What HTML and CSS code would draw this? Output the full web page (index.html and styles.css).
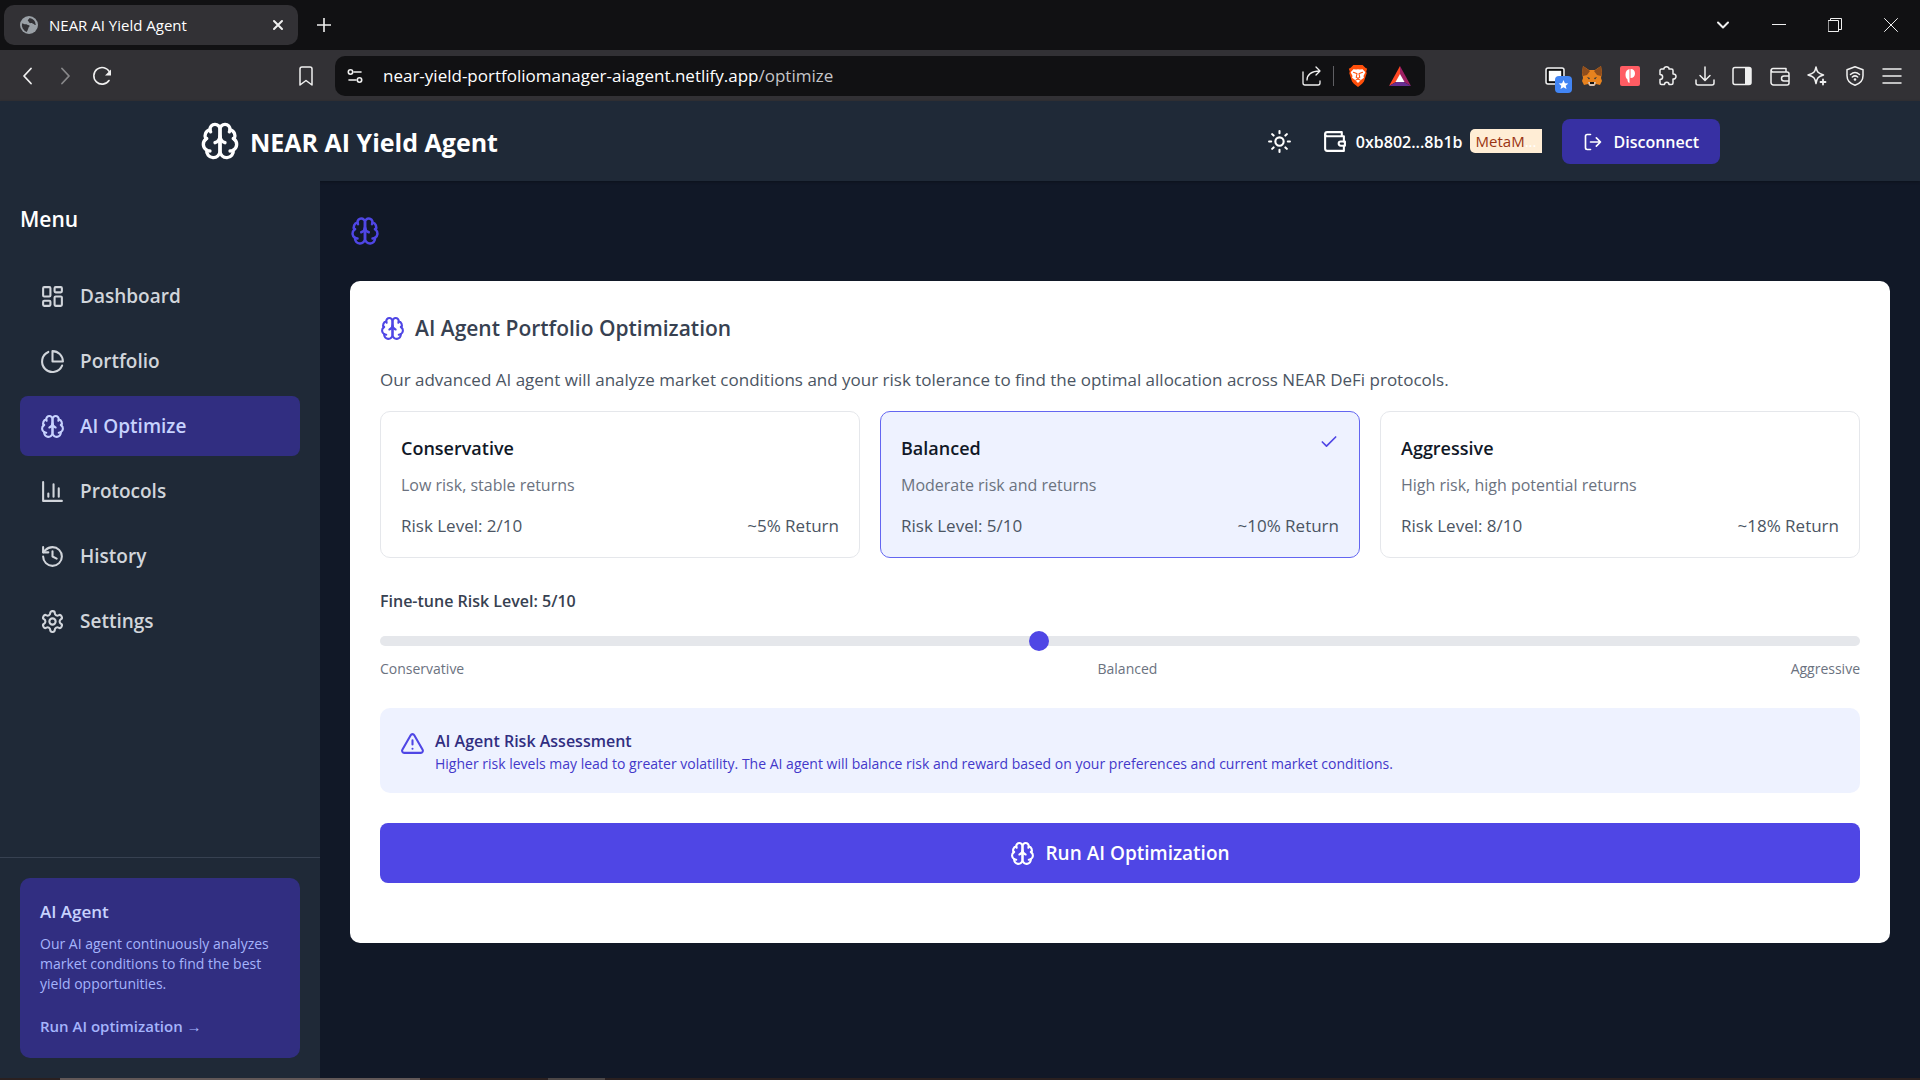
FILE: index.html
```html
<!DOCTYPE html>
<html lang="en">
<head>
<meta charset="utf-8">
<meta name="viewport" content="width=device-width, initial-scale=1">
<title>NEAR AI Yield Agent</title>
<link rel="stylesheet" href="styles.css">
</head>
<body>
<svg class="sprite" aria-hidden="true">
  <symbol id="brain" viewBox="0 0 24 24">
    <path d="M12 5a3 3 0 1 0-5.997.125 4 4 0 0 0-2.526 5.77 4 4 0 0 0 .556 6.588A4 4 0 1 0 12 18Z"/>
    <path d="M12 5a3 3 0 1 1 5.997.125 4 4 0 0 1 2.526 5.77 4 4 0 0 1-.556 6.588A4 4 0 1 1 12 18Z"/>
    <path d="M15 13a4.5 4.5 0 0 1-3-4 4.5 4.5 0 0 1-3 4"/>
    <path d="M17.599 6.5a3 3 0 0 0 .399-1.375"/>
    <path d="M6.003 5.125A3 3 0 0 0 6.401 6.5"/>
    <path d="M3.477 10.896a4 4 0 0 1 .585-.396"/>
    <path d="M19.938 10.5a4 4 0 0 1 .585.396"/>
    <path d="M6 18a4 4 0 0 1-1.967-.516"/>
    <path d="M19.967 17.484A4 4 0 0 1 18 18"/>
  </symbol>
</svg>

<div class="tabstrip">
  <div class="tab">
    <svg class="tab-globe" viewBox="0 0 18 18" aria-hidden="true"><circle cx="9" cy="9" r="9" fill="#9aa0a6"/><path d="M2 7.500c1.500 0 2.200.8 3.700.8 1.300 0 1.800.7 3.300.9.800.2.700 1.300 0 1.700-.8.500-.5 1.500-1 2.300-.5.900-.6 2-1.300 2.700A7.200 7.200 0 0 1 2 7.500zM9.500 2c-.3 1.200-1.500 1.300-1.700 2.300-.2.900 1 .9 1.200 1.700.2 1 1.200 1.400 2.200 1 .9-.3 1 .6 1.900.7 1 .2 1.300 1.300 2.700 1.300A7 7 0 0 0 9.500 2z" fill="#323135"/></svg>
    <span class="tab-title">NEAR AI Yield Agent</span>
    <button class="chrome-btn" aria-label="Close tab"><svg class="i12" viewBox="0 0 12 12"><path d="M2 2l8 8M10 2l-8 8" stroke-width="2"/></svg></button>
  </div>
  <button class="chrome-btn newtab" aria-label="New tab"><svg class="i14" viewBox="0 0 14 14"><path d="M7 0v14M0 7h14" stroke-width="1.600"/></svg></button>
  <div class="window-controls">
    <button class="chrome-btn" aria-label="Search tabs"><svg class="i14" viewBox="0 0 14 14"><path d="M2 4.500l5 5 5-5" stroke-width="2"/></svg></button>
    <button class="chrome-btn" aria-label="Minimize"><svg class="i14" viewBox="0 0 14 14"><path d="M0 6.500h14" stroke-width="1"/></svg></button>
    <button class="chrome-btn" aria-label="Restore"><svg class="i14" viewBox="0 0 14 14"><path d="M.5 2.500h10v11H.5zM2.500 2.500v-2h11v11h-3" stroke-width="1"/></svg></button>
    <button class="chrome-btn" aria-label="Close"><svg class="i14" viewBox="0 0 14 14"><path d="M.5.5l13 13M13.500.5l-13 13" stroke-width="1"/></svg></button>
  </div>
</div>

<div class="toolbar">
  <div class="nav-buttons">
    <button class="chrome-btn" aria-label="Back"><svg class="i20" viewBox="0 0 20 20"><path d="M13 2.500L6 10l7 7.500" stroke-width="1.800"/></svg></button>
    <button class="chrome-btn dim" aria-label="Forward"><svg class="i20" viewBox="0 0 20 20"><path d="M7 2.500l7 7.500-7 7.500" stroke-width="1.800"/></svg></button>
    <button class="chrome-btn" aria-label="Reload"><svg class="i20" viewBox="0 0 20 20"><path d="M17.500 6A8.300 8.300 0 1 0 17 14.500" stroke-width="1.600"/><path d="M19 3.500v6h-6z" fill="#f0f0f0" stroke="none"/></svg></button>
  </div>
  <button class="chrome-btn bookmark" aria-label="Bookmark"><svg class="i20" viewBox="0 0 20 20"><path d="M4 3a2 2 0 0 1 2-2h8a2 2 0 0 1 2 2v16l-6-4.500L4 19z" stroke-width="1.500"/></svg></button>
  <div class="address">
    <svg class="i16 stroke" viewBox="0 0 16 16" aria-hidden="true"><circle cx="3.500" cy="4" r="2.200" stroke-width="1.600"/><path d="M7 4h7M2 12h7" stroke-width="1.600"/><circle cx="12.500" cy="12" r="2.200" stroke-width="1.600"/></svg>
    <span class="url">near-yield-portfoliomanager-aiagent.netlify.app<span class="path">/optimize</span></span>
    <button class="chrome-btn share" aria-label="Share"><svg class="i20" viewBox="0 0 20 20"><path d="M1 6v11a2 2 0 0 0 2 2h13a2 2 0 0 0 2-2v-2M5 14c0-5 4-9 13-9M14 1l4 4-4 4" stroke-width="1.300"/></svg></button>
    <span class="divider"></span>
    <button class="chrome-btn" aria-label="Shields"><svg class="i22" viewBox="0 0 22 24"><path d="M6 0h10l3 3 2 1-1 3 .5 2-3 9-2 2.500L11 24l-4.500-3.500-2-2.500-3-9L2 7 1 4l2-1z" fill="#ff4f0a" stroke="none"/><path d="M6 4.500l3 .5 2-.5 2 .5 3-.5 3 3.500-2 4 .5 2-3 2-3.500 3.500L7.500 16l-3-2 .5-2-2-4z" fill="#fff" stroke="none"/><path d="M6 8l3.500 1.200M16 8l-3.500 1.200M10 9.500l-1 4 2 1 2-1-1-4M8.500 16.500l2.500-1.200 2.500 1.200" stroke="#ff4f0a" stroke-width="1.100"/></svg></button>
    <button class="chrome-btn" aria-label="Rewards"><svg class="i22" viewBox="0 0 22 22"><path d="M11 1L0 21l7-4 4-7z" fill="#ff4724" stroke="none"/><path d="M11 1l11 20-7-4-4-7z" fill="#9e1f63" stroke="none"/><path d="M0 21h22l-7-4H7z" fill="#662d91" stroke="none"/><path d="M11 9l4.500 8h-9z" fill="#fff" stroke="none"/></svg></button>
  </div>
  <div class="extensions">
    <button class="chrome-btn ext-badged" aria-label="Workspace extension"><svg class="i20" viewBox="0 0 20 20"><rect x="1" y="2" width="18" height="16" rx="2" stroke-width="1.500"/><rect x="3" y="4" width="14" height="12" fill="#fff" stroke="#000" stroke-width="1.500"/></svg><svg class="badge-star" viewBox="0 0 17 17"><rect width="17" height="17" rx="4" fill="#4285f4" stroke="none"/><path d="M8.500 4l1.400 3.200 3.400.3-2.600 2.200.8 3.300-3-1.800-3 1.800.8-3.300-2.600-2.200 3.400-.3z" fill="#fff" stroke="none"/></svg></button>
    <button class="chrome-btn" aria-label="MetaMask"><svg class="i20" viewBox="0 0 20 20"><path d="M1 0l6 4h6l6-4 1 7-1 5 1 3-2 4-4-1-2 2H8l-2-2-4 1-2-4 1-3-1-5z" fill="#e8821e" stroke="none"/><path d="M1 0l7 5-3 4-4 1-1-3zM19 0l-7 5 3 4 4 1 1-3z" fill="#8f4d1c" stroke="none"/><path d="M5 11l3 1-1 1.500zM15 11l-3 1 1 1.500z" fill="#233447" stroke="none"/><path d="M6 16h2v2h4v-2h2l-1 3-1 1H8l-1-1z" fill="#d7c1b3" stroke="none"/><path d="M8 16h4v2H8z" fill="#111" stroke="none"/></svg></button>
    <button class="chrome-btn" aria-label="Portfolio extension"><svg class="i20" viewBox="0 0 20 20"><rect width="20" height="20" rx="2" fill="#ff5c63" stroke="none"/><path d="M9.500 3v14c-1.500-.5-2-1.500-2-3.500C6 12.500 5.500 10.500 5.500 8.500 5.500 5.500 7 3.500 9.500 3zM10.500 3c3 0 4.500 2 4.500 4.500S13.500 12 10.500 12z" fill="#fff" stroke="none"/></svg></button>
    <button class="chrome-btn" aria-label="Extensions"><svg class="i20" viewBox="0 0 20 20"><path d="M3 4.500A1.500 1.500 0 0 1 4.500 3H7c-.5-3 5.500-3 5 0h2.500A1.500 1.500 0 0 1 16 4.500V8c4-.5 4 5.500 0 5v4a1.500 1.500 0 0 1-1.500 1.500H12c0-3-4.500-3-4.500 0h-3A1.500 1.500 0 0 1 3 17v-3.500c3.500 0 3.500-5 0-5z" stroke-width="1.500"/></svg></button>
    <button class="chrome-btn" aria-label="Downloads"><svg class="i20" viewBox="0 0 20 20"><path d="M10 1v13M5 9.500l5 5 5-5M1 14v3a2 2 0 0 0 2 2h14a2 2 0 0 0 2-2v-3" stroke-width="1.500"/></svg></button>
    <button class="chrome-btn" aria-label="Side panel"><svg class="i20" viewBox="0 0 20 20"><rect x="1" y="1.500" width="18" height="17" rx="2" stroke-width="1.500"/><path d="M13 2h6v16h-6z" fill="#f0f0f0" stroke="none"/></svg></button>
    <button class="chrome-btn" aria-label="Wallet"><svg class="i20" viewBox="0 0 20 20"><path d="M16 5V2.500H3a1.700 1.700 0 0 0 0 3.500h14a2 2 0 0 1 2 2v9a2 2 0 0 1-2 2H3.500A2.500 2.500 0 0 1 1 16.500V4M19 10h-5a2.500 2.500 0 0 0 0 5h5" stroke-width="1.500"/></svg></button>
    <button class="chrome-btn" aria-label="Leo AI"><svg class="i20" viewBox="0 0 20 20"><path d="M9 1c1 5 2 6.500 7.500 8C11 10.500 10 12 9 17.500 8 12 7 10.500 1 9 7 7.500 8 6 9 1z" stroke-width="1.500"/><path d="M16 13.500v5M13.500 16h5" stroke-width="1.800"/></svg></button>
    <button class="chrome-btn" aria-label="VPN"><svg class="i20" viewBox="0 0 20 20"><path d="M10 .8l8 3v6c0 5-3.500 8-8 9.500-4.500-1.500-8-4.500-8-9.500v-6z" stroke-width="1.500"/><path d="M5.500 8.500c2.700-2.500 6.300-2.500 9 0M7.300 11c1.800-1.500 3.600-1.500 5.400 0" stroke-width="1.500"/><circle cx="10" cy="13.500" r="1.300" fill="#f0f0f0" stroke="none"/></svg></button>
    <button class="chrome-btn" aria-label="Menu"><svg class="i20" viewBox="0 0 20 20"><path d="M1 3h18M1 10h18M1 17h18" stroke-width="1.500"/></svg></button>
  </div>
</div>

<header class="app-header">
  <div class="header-inner">
    <div class="brand"><svg class="icon i40"><use href="#brain"/></svg><h1>NEAR AI Yield Agent</h1></div>
    <div class="account">
      <button class="icon-btn" aria-label="Toggle theme"><svg class="icon i25" viewBox="0 0 24 24"><circle cx="12" cy="12" r="4"/><path d="M12 2v2M12 20v2M4.930 4.930l1.410 1.410M17.660 17.660l1.410 1.410M2 12h2M20 12h2M6.340 17.660l-1.410 1.410M19.070 4.930l-1.410 1.410"/></svg></button>
      <div class="wallet">
        <svg class="icon i25" viewBox="0 0 24 24"><path d="M21 12V7H5a2 2 0 0 1 0-4h14v4"/><path d="M3 5v14a2 2 0 0 0 2 2h16v-5"/><path d="M18 12a2 2 0 0 0 0 4h4v-4Z"/></svg>
        <span class="address-text">0xb802...8b1b</span>
        <span class="provider"><span class="provider-name">MetaM</span>...</span>
      </div>
      <button class="disconnect"><svg class="icon i20" viewBox="0 0 24 24"><path d="M9 21H5a2 2 0 0 1-2-2V5a2 2 0 0 1 2-2h4"/><path d="M16 17l5-5-5-5M21 12H9"/></svg>Disconnect</button>
    </div>
  </div>
</header>

<div class="layout">
  <aside class="sidebar">
    <h2>Menu</h2>
    <nav>
      <a href="#dashboard"><svg class="icon i25" viewBox="0 0 24 24"><rect x="3" y="3" width="7" height="9" rx="1"/><rect x="14" y="3" width="7" height="5" rx="1"/><rect x="14" y="12" width="7" height="9" rx="1"/><rect x="3" y="16" width="7" height="5" rx="1"/></svg>Dashboard</a>
      <a href="#portfolio"><svg class="icon i25" viewBox="0 0 24 24"><path d="M21.210 15.890A10 10 0 1 1 8 2.830"/><path d="M22 12A10 10 0 0 0 12 2v10z"/></svg>Portfolio</a>
      <a href="#optimize" class="active" aria-current="page"><svg class="icon i25"><use href="#brain"/></svg>AI Optimize</a>
      <a href="#protocols"><svg class="icon i25" viewBox="0 0 24 24"><path d="M3 3v18h18M18 17V9M13 17V5M8 17v-3"/></svg>Protocols</a>
      <a href="#history"><svg class="icon i25" viewBox="0 0 24 24"><path d="M3 12a9 9 0 1 0 9-9 9.750 9.750 0 0 0-6.740 2.740L3 8"/><path d="M3 3v5h5M12 7v5l4 2"/></svg>History</a>
      <a href="#settings"><svg class="icon i25" viewBox="0 0 24 24"><path d="M12.220 2h-.44a2 2 0 0 0-2 2v.18a2 2 0 0 1-1 1.730l-.43.25a2 2 0 0 1-2 0l-.15-.08a2 2 0 0 0-2.730.73l-.22.38a2 2 0 0 0 .73 2.730l.15.1a2 2 0 0 1 1 1.720v.51a2 2 0 0 1-1 1.740l-.15.09a2 2 0 0 0-.73 2.730l.22.38a2 2 0 0 0 2.730.73l.15-.08a2 2 0 0 1 2 0l.43.25a2 2 0 0 1 1 1.730V20a2 2 0 0 0 2 2h.44a2 2 0 0 0 2-2v-.18a2 2 0 0 1 1-1.730l.43-.25a2 2 0 0 1 2 0l.15.08a2 2 0 0 0 2.730-.73l.22-.39a2 2 0 0 0-.73-2.730l-.15-.08a2 2 0 0 1-1-1.740v-.5a2 2 0 0 1 1-1.740l.15-.09a2 2 0 0 0 .73-2.730l-.22-.38a2 2 0 0 0-2.730-.73l-.15.08a2 2 0 0 1-2 0l-.43-.25a2 2 0 0 1-1-1.730V4a2 2 0 0 0-2-2z"/><circle cx="12" cy="12" r="3"/></svg>Settings</a>
    </nav>
    <div class="sidebar-footer">
      <div class="promo">
        <h3>AI Agent</h3>
        <p>Our AI agent continuously analyzes market conditions to find the best yield opportunities.</p>
        <a href="#optimize">Run AI optimization →</a>
      </div>
    </div>
  </aside>

  <main>
    <svg class="icon i30 accent"><use href="#brain"/></svg>
    <section class="card">
      <h2><svg class="icon i25 accent"><use href="#brain"/></svg>AI Agent Portfolio Optimization</h2>
      <p class="intro">Our advanced AI agent will analyze market conditions and your risk tolerance to find the optimal allocation across NEAR DeFi protocols.</p>
      <div class="options">
        <button class="option">
          <span class="option-title">Conservative</span>
          <span class="option-desc">Low risk, stable returns</span>
          <span class="option-meta"><span>Risk Level: 2/10</span><span>~5% Return</span></span>
        </button>
        <button class="option selected" aria-pressed="true">
          <span class="option-title">Balanced</span>
          <span class="option-desc">Moderate risk and returns</span>
          <span class="option-meta"><span>Risk Level: 5/10</span><span>~10% Return</span></span>
          <svg class="icon i20 accent check" viewBox="0 0 24 24"><path d="M20 6 9 17l-5-5"/></svg>
        </button>
        <button class="option">
          <span class="option-title">Aggressive</span>
          <span class="option-desc">High risk, high potential returns</span>
          <span class="option-meta"><span>Risk Level: 8/10</span><span>~18% Return</span></span>
        </button>
      </div>
      <div class="risk">
        <label for="risk">Fine-tune Risk Level: 5/10</label>
        <input id="risk" type="range" min="1" max="10" value="5">
        <div class="scale"><span>Conservative</span><span>Balanced</span><span>Aggressive</span></div>
      </div>
      <div class="notice">
        <svg class="icon i25 accent" viewBox="0 0 24 24"><path d="m21.730 18-8-14a2 2 0 0 0-3.480 0l-8 14A2 2 0 0 0 4 21h16a2 2 0 0 0 1.730-3Z"/><path d="M12 9v4M12 17h.01"/></svg>
        <div>
          <h3>AI Agent Risk Assessment</h3>
          <p>Higher risk levels may lead to greater volatility. The AI agent will balance risk and reward based on your preferences and current market conditions.</p>
        </div>
      </div>
      <button class="run"><svg class="icon i25"><use href="#brain"/></svg>Run AI Optimization</button>
    </section>
  </main>
</div>
<div class="taskbar"><span class="task wide"></span><span class="task"></span></div>
</body>
</html>
```
FILE: styles.css
```css
* { box-sizing: border-box; margin: 0; padding: 0; }

body {
  min-height: 100vh;
  display: flex;
  flex-direction: column;
  background: #111827;
  color: #fff;
  font-family: "Open Sans", "Noto Sans", sans-serif;
  font-size: 16px;
  line-height: 25px;
}

button { border: 0; background: none; color: inherit; font: inherit; cursor: pointer; }
a { color: inherit; text-decoration: none; }
svg { display: block; flex: none; }
.sprite { position: absolute; width: 0; height: 0; }

.icon { fill: none; stroke: currentColor; stroke-width: 2; stroke-linecap: round; stroke-linejoin: round; }
.i12 { width: 12px; height: 12px; }
.i14 { width: 14px; height: 14px; }
.i16 { width: 16px; height: 16px; }
.i20 { width: 20px; height: 20px; }
.i22 { width: 22px; height: 22px; }
.i25 { width: 25px; height: 25px; }
.i30 { width: 30px; height: 30px; }
.i40 { width: 40px; height: 40px; }
.accent { color: #4f46e5; }

/* Browser frame */
.chrome-btn svg, .stroke { fill: none; stroke: #f0f0f0; stroke-linecap: round; stroke-linejoin: round; }
.chrome-btn { display: flex; }
.dim { opacity: .45; }

.tabstrip { display: flex; align-items: center; height: 50px; padding: 0 22px 0 4px; background: #111113; }
.tab { display: flex; align-items: center; gap: 11px; width: 294px; height: 40px; padding: 0 14px 0 16px; border-radius: 10px; background: #323135; }
.tab-globe { width: 18px; height: 18px; }
.tab-title { flex: 1; font-size: 15px; line-height: 24px; }
.newtab { margin-left: 19px; }
.window-controls { display: flex; gap: 42px; margin-left: auto; }

.toolbar { display: flex; align-items: center; height: 51px; padding: 0 18px; background: #323135; }
.nav-buttons { display: flex; gap: 17px; }
.bookmark { margin-left: auto; }
.address { display: flex; align-items: center; gap: 20px; width: 1090px; height: 40px; margin: 0 120px 0 19px; padding: 0 14px 0 12px; border-radius: 10px; background: #111113; }
.url { flex: 1; font-size: 17px; line-height: 24px; }
.path { color: #c5c5c8; }
.divider { width: 1px; height: 20px; margin: 0 -7px 0 -9px; background: #5f5f63; }
.extensions { display: flex; justify-content: space-between; width: 357px; }
.ext-badged { position: relative; }
.ext-badged .badge-star { position: absolute; left: 10px; top: 10px; width: 17px; height: 17px; }

/* App header */
.app-header { background: #1f2937; box-shadow: 0 1px 3px rgba(0, 0, 0, .3); }
.header-inner { display: flex; align-items: center; justify-content: space-between; max-width: 1600px; height: 80px; margin: 0 auto; padding: 0 40px; }
.brand { display: flex; align-items: center; gap: 10px; }
.brand h1 { padding-top: 2px; font-size: 25px; font-weight: 700; }
.account { display: flex; align-items: center; gap: 20px; }
.icon-btn { padding: 10px; }
.wallet { display: flex; align-items: center; font-weight: 600; }
.address-text { margin: 0 7px 0 9px; padding-top: 2px; }
.provider { padding: 1px 6px 0; border-radius: 5px 0 0 5px; background: #ffedd5; font-size: 15px; font-weight: 500; line-height: 23px; }
.provider-name { color: #9a3412; }
.disconnect { display: flex; align-items: center; gap: 10px; height: 45px; padding: 2px 21px 0; border-radius: 8px; background: #3730a3; font-weight: 600; }

/* Layout */
.layout { display: flex; flex: 1; }
.sidebar { display: flex; flex-direction: column; width: 320px; background: #1f2937; }
.sidebar h2 { padding: 26px 20px 24px; font-size: 21px; font-weight: 600; line-height: 25px; }
.sidebar nav { display: flex; flex-direction: column; gap: 5px; padding: 10px 20px; }
.sidebar nav a { display: flex; align-items: center; gap: 15px; height: 60px; padding: 0 20px; border-radius: 8px; color: #d1d5db; font-size: 19px; font-weight: 600; }
.sidebar nav a.active { background: #312e81; color: #c7d2fe; }
.sidebar-footer { margin-top: auto; padding: 20px; border-top: 1px solid #374151; }
.promo { padding: 20px; border-radius: 10px; background: #312e81; color: #a5b4fc; font-size: 14px; line-height: 20px; }
.promo h3 { margin-bottom: 8px; color: #c7d2fe; font-size: 17px; font-weight: 600; line-height: 28px; }
.promo a { display: block; margin-top: 20px; font-size: 15px; font-weight: 600; line-height: 24px; }

main { flex: 1; min-width: 0; padding: 35px 30px; }
.card { margin-top: 35px; padding: 30px 30px 60px; border-radius: 10px; background: #fff; color: #374151; }
.card h2 { display: flex; align-items: center; gap: 10px; font-size: 21px; font-weight: 600; line-height: 35px; }
.intro { margin: 21px 0 19px; color: #4b5563; font-size: 17px; }
.options { display: grid; grid-template-columns: repeat(3, 1fr); gap: 20px; }
.option { position: relative; display: flex; flex-direction: column; gap: 10px; padding: 21px 20px 19px; border: 1px solid #e5e7eb; border-radius: 10px; text-align: left; color: #4b5563; }
.option.selected { border-color: #6366f1; background: #eef2ff; }
.option-title { color: #111827; font-size: 18px; font-weight: 600; line-height: 30px; }
.option-desc { color: #6b7280; }
.option-meta { display: flex; justify-content: space-between; margin-top: 5px; font-size: 17px; }
.check { position: absolute; top: 20px; right: 20px; }

.risk { margin-top: 31px; }
.risk label { display: block; font-weight: 600; }
.risk input { display: block; appearance: none; width: 100%; height: 10px; margin: 22px 0 13px; border-radius: 5px; background: #e5e7eb; }
.risk input::-webkit-slider-thumb { appearance: none; width: 20px; height: 20px; border-radius: 50%; background: #4f46e5; }
.scale { display: flex; justify-content: space-between; color: #6b7280; font-size: 14px; line-height: 20px; }

.notice { display: flex; gap: 10px; margin: 29px 0 30px; padding: 21px 20px 19px; border-radius: 10px; background: #eef2ff; color: #4338ca; font-size: 14px; line-height: 20px; }
.notice .icon { margin-top: 2px; }
.notice h3 { color: #312e81; font-size: 16px; font-weight: 600; line-height: 25px; }
.run { display: flex; align-items: center; justify-content: center; gap: 10px; width: 100%; height: 60px; border-radius: 8px; background: #4f46e5; color: #fff; font-size: 19px; font-weight: 600; }

.taskbar { display: flex; gap: 128px; height: 2px; padding-left: 60px; background: #2a2020; }
.task { width: 57px; background: #4c4646; }
.task.wide { width: 360px; background: #625858; }
```
